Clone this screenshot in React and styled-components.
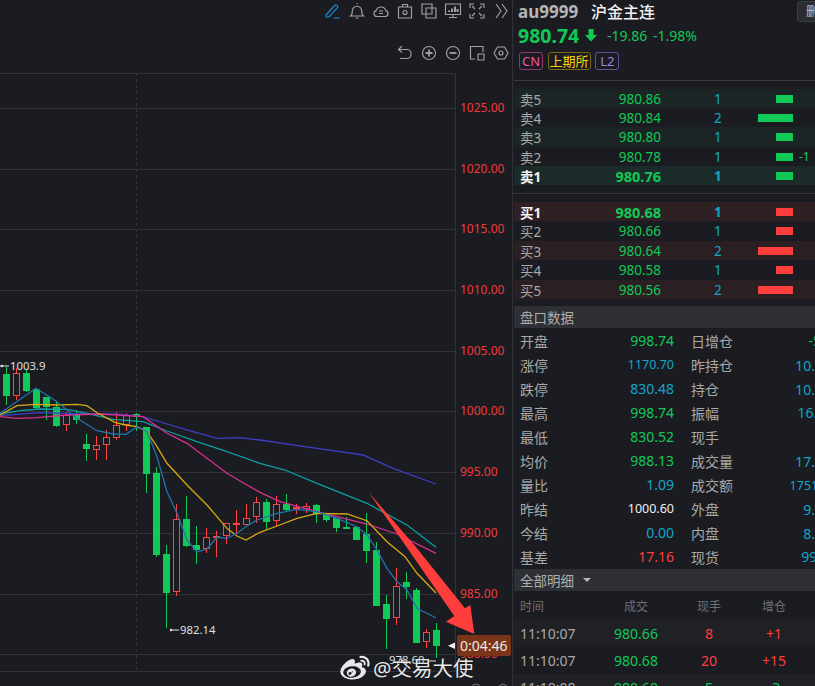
import React from "react";
import styled, { createGlobalStyle } from "styled-components";
import { RiWeiboFill } from "react-icons/ri";

const GREEN = "#10c957";
const RED = "#ff3d3d";
const CYAN = "#0fa6c9";
const FONT = `"Noto Sans", "Noto Sans CJK SC", sans-serif`;

const GlobalStyle = createGlobalStyle`
  html, body {
    margin: 0;
    height: 100%;
    overflow: hidden;
    background: #1b1c21;
    font-family: ${FONT};
  }
`;

const Page = styled.div`
  display: flex;
  width: 815px;
  height: 686px;
  overflow: hidden;
  background: #1b1c21;
`;

const ChartColumn = styled.div`
  position: relative;
  flex: 0 0 512px;
  display: flex;
  flex-direction: column;
`;

const Toolbar = styled.div`
  flex: none;
  display: flex;
  justify-content: flex-end;
  align-items: center;
  gap: 6px;
  box-sizing: border-box;
  height: ${(p) => p.$height}px;
  padding: ${(p) => p.$top || 0}px 2px 0 0;
`;

const ToolIcon = styled.svg`
  width: 18px;
  height: 18px;
  fill: none;
  stroke: ${(p) => p.$color || "#a0a1a3"};
  stroke-width: 1.150;
`;

const ChartSvg = styled.svg`
  display: block;
  flex: 1;
  width: 512px;
`;

const AxisText = styled.text`
  font-family: ${FONT};
  font-size: 12px;
  fill: #f03a3a;
`;

const MarkText = styled.text`
  font-family: ${FONT};
  font-size: 11.3px;
  fill: #dfe0e2;
`;

const TagText = styled.text`
  font-family: ${FONT};
  font-size: 14px;
  fill: #ece7e2;
`;

const Watermark = styled.div`
  position: absolute;
  left: 339px;
  top: 652px;
  display: flex;
  align-items: center;
  gap: 2px;
  color: #e8e8e8;
  font-size: 20.500px;
  line-height: 28px;
  white-space: nowrap;
  text-shadow: 0 0 1px #000;
`;

const Panel = styled.div`
  flex: 0 0 340px;
  border-left: 1px solid #303237;
`;

const Quote = styled.div`
  position: relative;
  height: 81px;
  margin-left: 1px;
  padding-left: 4px;
  box-sizing: border-box;
  border-bottom: 1px solid #3a3b40;
`;

const TitleRow = styled.div`
  display: flex;
  align-items: center;
  height: 22px;
  white-space: nowrap;
`;

const Code = styled.span`
  width: 73px;
  color: #b5b5b5;
  font-size: 17px;
  font-weight: 700;
`;

const Name = styled.span`
  color: #f0f0f0;
  font-size: 16px;
  font-weight: 500;
`;

const WatchButton = styled.div`
  position: absolute;
  left: 283px;
  top: 1px;
  width: 60px;
  height: 21px;
  box-sizing: border-box;
  padding-left: 8px;
  border: 1px solid #3c3e43;
  border-radius: 3px;
  background: #2a2c31;
  color: #c4c4c4;
  font-size: 12px;
  line-height: 20px;
  white-space: nowrap;
`;

const PriceRow = styled.div`
  display: flex;
  align-items: center;
  height: 26px;
  margin-bottom: 4px;
  color: ${GREEN};
  white-space: nowrap;
`;

const LastPrice = styled.span`
  width: 66px;
  font-size: 19.500px;
  font-weight: 700;
`;

const Change = styled.span`
  width: ${(p) => p.$width}px;
  font-size: 14px;
`;

const TagRow = styled.div`
  display: flex;
  gap: 4.500px;
  padding-left: 1px;
`;

const Tag = styled.span`
  height: 16px;
  padding: 0 ${(p) => p.$pad}px;
  border: 1px solid ${(p) => p.$border};
  border-radius: 3px;
  color: ${(p) => p.$color};
  font-size: 13px;
  line-height: 16px;
`;

const Book = styled.div`
  padding: ${(p) => p.$top}px 0 ${(p) => p.$bottom}px 1px;
  border-bottom: ${(p) => (p.$line ? "1px solid #35363b" : "none")};
`;

const BANDS = {
  sell: "#1b2526",
  sellHot: "#1b2b29",
  buy: "#2a1f23",
  buyHot: "#2f2023",
  none: "transparent",
};

const BookRow = styled.div`
  display: grid;
  grid-template-columns: 40px 101px 94px 38px 40px;
  align-items: center;
  height: ${(p) => p.$height}px;
  padding-left: 6px;
  background: ${(p) => BANDS[p.$band]};
`;

const BookLabel = styled.span`
  color: ${(p) => (p.$hot ? "#f4f4f4" : "#a9a9a9")};
  font-size: 13.500px;
  font-weight: ${(p) => (p.$hot ? 700 : 400)};
`;

const BookPrice = styled.span`
  text-align: right;
  color: ${GREEN};
  font-size: ${(p) => (p.$hot ? 14.5 : 13.5)}px;
  font-weight: ${(p) => (p.$hot ? 700 : 400)};
`;

const BookQty = styled.span`
  padding-left: 53px;
  color: ${CYAN};
  font-size: 13.500px;
  font-weight: ${(p) => (p.$hot ? 700 : 400)};
`;

const BarCell = styled.span`
  display: flex;
  justify-content: flex-end;
`;

const Bar = styled.span`
  width: ${(p) => p.$qty * 17.5}px;
  height: 8px;
  background: ${(p) => p.$color};
`;

const Delta = styled.span`
  padding-left: 6px;
  color: ${GREEN};
  font-size: 12px;
`;

const SectionHead = styled.div`
  display: flex;
  align-items: center;
  gap: 9px;
  height: 22px;
  padding-left: 6px;
  margin: 0 0 1px 1px;
  background: #2e3035;
  color: #aeaeae;
  font-size: 13.500px;
`;

const Caret = styled.span`
  width: 0;
  height: 0;
  border-left: 4px solid transparent;
  border-right: 4px solid transparent;
  border-top: 4px solid #b8b8b8;
`;

const StatRow = styled.div`
  display: grid;
  grid-template-columns: 60px 94px 17px 60px 94px;
  align-items: center;
  height: 24px;
  padding-left: 7px;
`;

const StatLabel = styled.span`
  color: #a9a9a9;
  font-size: 14px;
`;

const StatValue = styled.span`
  text-align: right;
  color: ${(p) => p.$color};
  font-size: ${(p) => (p.$small ? 12.5 : 14)}px;
  white-space: nowrap;
`;

const DetailRow = styled.div`
  display: grid;
  grid-template-columns: 76px 80px 66px 64px;
  align-items: center;
  height: ${(p) => p.$height}px;
  padding-left: 7px;
  background: ${(p) => p.$bg || "transparent"};
`;

const HeadCell = styled.span`
  text-align: ${(p) => (p.$left ? "left" : "center")};
  color: #6f7074;
  font-size: 12px;
`;

const Cell = styled.span`
  text-align: ${(p) => (p.$left ? "left" : "center")};
  color: ${(p) => p.$color};
  font-size: 14px;
`;

const TOP_ICONS = [
  <ToolIcon key="pen" viewBox="0 0 18 18" $color="#1f8ad8">
    <path d="M2 13l8.500-9.500a1.800 1.800 0 0 1 2.700 2.400L5 15H2v-2zM9.500 16h6" />
  </ToolIcon>,
  <ToolIcon key="bell" viewBox="0 0 18 18">
    <path d="M2.500 14c1.500-1 1.800-2 1.800-5a4.700 4.700 0 0 1 9.400 0c0 3 .3 4 1.800 5zM7.500 16h3M9 2V1" />
  </ToolIcon>,
  <ToolIcon key="cloud" viewBox="0 0 18 18">
    <path d="M5 14.500a3 3 0 0 1-.8-5.900 5 5 0 0 1 9.600 0 3 3 0 0 1-.8 5.900zM7 9h4M7 11.500h4" />
  </ToolIcon>,
  <ToolIcon key="camera" viewBox="0 0 18 18">
    <path d="M2.500 5h13v11h-13zM6.500 5V2.500h5V5" />
    <circle cx="9" cy="10.500" r="2" />
  </ToolIcon>,
  <ToolIcon key="copy" viewBox="0 0 18 18">
    <path d="M2 2h10v10H2zM6 6h10v10H6z" />
  </ToolIcon>,
  <ToolIcon key="screen" viewBox="0 0 18 18">
    <path d="M1.500 2h15v10.500h-15zM9 12.500V15M5 15.500h8" />
    <path d="M5 10V8.500M8 10V6.500M11 10V4.500M13.500 10V7" strokeWidth="2" />
  </ToolIcon>,
  <ToolIcon key="full" viewBox="0 0 18 18">
    <path d="M2 6V2h4M12 2h4v4M16 12v4h-4M6 16H2v-4M7 7L4 4M11 7l3-3M11 11l3 3M7 11l-3 3" />
  </ToolIcon>,
  <ToolIcon key="more" viewBox="0 0 18 18">
    <path d="M4 2l5 7-5 7M10 2l5 7-5 7" />
  </ToolIcon>,
];

const CHART_ICONS = [
  <ToolIcon key="undo" viewBox="0 0 18 18">
    <path d="M6 2L2.500 5.500 6 8.500M3 5.500h8a4 4 0 0 1 4 4v1a4 4 0 0 1-4 4H4" />
  </ToolIcon>,
  <ToolIcon key="plus" viewBox="0 0 18 18">
    <circle cx="9" cy="9" r="6.500" />
    <path d="M5.500 9h7M9 5.500v7" strokeWidth="1.800" />
  </ToolIcon>,
  <ToolIcon key="minus" viewBox="0 0 18 18">
    <circle cx="9" cy="9" r="6.500" />
    <path d="M5.500 9h7" strokeWidth="1.800" />
  </ToolIcon>,
  <ToolIcon key="layout" viewBox="0 0 18 18">
    <path d="M7 15H2.500V2.500H15V8M10 10h6v6h-6z" />
  </ToolIcon>,
  <ToolIcon key="gear" viewBox="0 0 18 18">
    <path d="M5.500 3h7L16 9l-3.500 6h-7L2 9z" />
    <circle cx="9" cy="9" r="2" />
  </ToolIcon>,
];

const GRID_LINES = [
  { y: 108, label: "1025.00" },
  { y: 169, label: "1020.00" },
  { y: 229, label: "1015.00" },
  { y: 290, label: "1010.00" },
  { y: 351, label: "1005.00" },
  { y: 411, label: "1000.00" },
  { y: 472, label: "995.00" },
  { y: 533, label: "990.00" },
  { y: 594, label: "985.00" },
  { y: 654, label: "980.00" },
];

// up, wick top, wick bottom, body top, body bottom
const CANDLES = [
  [0, 367, 405, 374, 396], [1, 368, 400, 373, 396], [0, 369, 392, 373, 391],
  [0, 388, 410, 389, 408], [0, 397, 420, 397, 407], [0, 402, 427, 407, 426],
  [1, 412, 431, 415, 425], [0, 410, 424, 415, 420], [0, 434, 461, 444, 449],
  [1, 436, 460, 445, 450], [1, 430, 460, 437, 445], [1, 412, 440, 425, 438],
  [1, 413, 431, 415, 425], [0, 413, 431, 414, 417], [0, 427, 493, 427, 474],
  [0, 467, 557, 473, 555], [0, 545, 628, 554, 593], [1, 504, 596, 519, 592],
  [0, 496, 547, 519, 546], [0, 526, 564, 545, 550], [1, 528, 553, 537, 549],
  [1, 531, 557, 536, 537], [1, 523, 544, 523, 536], [1, 510, 534, 523, 525],
  [1, 504, 525, 518, 525], [1, 497, 523, 502, 517], [0, 499, 530, 502, 522],
  [1, 496, 526, 504, 521], [0, 494, 512, 504, 510], [1, 504, 514, 507, 509],
  [1, 503, 513, 506, 509], [0, 504, 523, 505, 514], [0, 513, 522, 513, 520],
  [0, 518, 532, 518, 528], [0, 517, 529, 527, 529], [0, 527, 540, 527, 540],
  [0, 513, 563, 534, 551], [0, 542, 606, 550, 606], [0, 595, 649, 604, 619],
  [1, 568, 625, 586, 618], [0, 572, 599, 582, 587], [0, 588, 643, 590, 643],
  [1, 629, 648, 632, 642], [0, 623, 658, 630, 646],
];

const MA_LINES = [
  {
    color: "#3b3fc4",
    points: "0,415.700 40,412.700 83,414 117,414 143,416.700 167,424 193,431.700 217,438.300 240,437.700 260,440 310,447.300 363,455 393,468.300 436,484",
  },
  {
    color: "#0d9ea0",
    points: "0,414 20,410.700 40,409 67,409.300 87,413.300 113,419.300 143,421.700 167,431 197,441.700 227,451.700 260,463.300 285,470 317,483.300 367,503.300 407,525 436,547.300",
  },
  {
    color: "#d6308f",
    points: "0,416.700 17,418.300 37,417.700 67,415 100,414 143,416.700 167,433.300 187,443.300 227,473.300 247,485 260,492.300 280,501.700 317,511.700 367,524 397,534 436,553.300",
  },
  {
    color: "#d9a90f",
    points: "0,415 17,405.700 36,404.300 57,405 77,404.300 87,405.700 97,412.700 115,422.300 125,425 137,426.700 147,431.700 157,446.700 167,463.300 187,485 207,505 227,528.300 237,536 246,540 260,532.300 277,526 297,518.300 317,513.300 347,514 367,520.700 387,541.700 405,556.700 417,573.300 436,593",
  },
  {
    color: "#1f74ac",
    points: "0,413.300 36,388.300 57,401.700 77,418.300 97,430.700 113,434 126,434.300 137,426.700 147,431.700 157,456.700 167,491.700 177,513.300 187,540 197,552 207,549 217,537.300 227,538.300 237,533.300 247,526 257,520 277,513.300 297,509.300 317,511.700 337,518.300 357,526.700 367,535 377,550 387,568.300 397,581.700 407,590 417,608.300 436,618",
  },
];

const Candle = ({ index, data }) => {
  const [up, wickTop, wickBottom, bodyTop, bodyBottom] = data;
  const x = 6.5 + index * 10;
  const color = up ? "#ff4242" : GREEN;
  const height = bodyBottom - bodyTop;
  return (
    <g>
      <line x1={x} x2={x} y1={wickTop} y2={wickBottom} stroke={color} strokeWidth="1" />
      {up ? (
        <rect
          x={x - 3}
          y={bodyTop + 0.5}
          width="6"
          height={Math.max(height - 1, 1)}
          fill="#1b1c21"
          stroke={color}
        />
      ) : (
        <rect x={x - 3.5} y={bodyTop} width="7" height={height} fill={color} />
      )}
    </g>
  );
};

const Chart = () => (
  <ChartSvg viewBox="0 73 512 613" preserveAspectRatio="xMinYMin slice">
    <line x1="0" x2="455" y1="73.500" y2="73.500" stroke="#303237" />
    <line x1="455.500" x2="455.500" y1="73" y2="671" stroke="#303237" />
    <line x1="0" x2="455" y1="671.500" y2="671.500" stroke="#303237" />
    <line x1="136.500" x2="136.500" y1="73" y2="671" stroke="#33353a" strokeDasharray="3 3" />
    {GRID_LINES.map((line) => (
      <g key={line.y}>
        <line x1="0" x2="455" y1={line.y + 0.5} y2={line.y + 0.5} stroke="#303237" />
        <AxisText x="460" y={line.y + 4}>{line.label}</AxisText>
      </g>
    ))}
    {CANDLES.map((data, i) => (
      <Candle key={i} index={i} data={data} />
    ))}
    {MA_LINES.map((line) => (
      <polyline key={line.color} points={line.points} fill="none" stroke={line.color} strokeWidth="1.300" />
    ))}

    <path d="M0 366h9" stroke="#dfe0e2" />
    <circle cx="2" cy="366" r="1.200" fill="#dfe0e2" />
    <MarkText x="10" y="370">1003.9</MarkText>
    <path d="M170 630h9" stroke="#dfe0e2" />
    <circle cx="171" cy="630" r="1.200" fill="#dfe0e2" />
    <MarkText x="180" y="634">982.14</MarkText>
    <MarkText x="389" y="664">978.60</MarkText>
    <path d="M428 661h8" stroke="#dfe0e2" />

    <path
      d="M369 492.700L415.700 546.700L465 608.300L470.300 605L474.300 634L446 621.700L454.300 616Z"
      fill="#ff3d3a"
    />
    <path d="M448 645.700L455 642.500V649z" fill="#f0f0f0" />
    <rect x="457" y="635" width="54" height="21" rx="2" fill="#7a3519" />
    <TagText x="460" y="651">0:04:46</TagText>

    <circle cx="476" cy="688" r="4" fill="none" stroke="#777" />
    <circle cx="503" cy="688" r="4" fill="none" stroke="#777" />
  </ChartSvg>
);

const SELLS = [
  { label: "卖5", price: "980.86", qty: 1, band: "sell" },
  { label: "卖4", price: "980.84", qty: 2, band: "none" },
  { label: "卖3", price: "980.80", qty: 1, band: "sell" },
  { label: "卖2", price: "980.78", qty: 1, band: "none", delta: "-1" },
  { label: "卖1", price: "980.76", qty: 1, band: "sellHot", hot: true },
];

const BUYS = [
  { label: "买1", price: "980.68", qty: 1, band: "buyHot", hot: true },
  { label: "买2", price: "980.66", qty: 1, band: "none" },
  { label: "买3", price: "980.64", qty: 2, band: "buy" },
  { label: "买4", price: "980.58", qty: 1, band: "none" },
  { label: "买5", price: "980.56", qty: 2, band: "buy" },
];

const STATS = [
  ["开盘", "998.74", GREEN, false, "日增仓", "-5128", GREEN, false],
  ["涨停", "1170.70", CYAN, true, "昨持仓", "10.54万", CYAN, false],
  ["跌停", "830.48", CYAN, false, "持仓", "10.49万", CYAN, false],
  ["最高", "998.74", GREEN, false, "振幅", "16.77%", CYAN, false],
  ["最低", "830.52", GREEN, false, "现手", "2", CYAN, false],
  ["均价", "988.13", GREEN, false, "成交量", "17.72万", CYAN, false],
  ["量比", "1.09", CYAN, false, "成交额", "175182亿", CYAN, true],
  ["昨结", "1000.60", "#eeeeee", true, "外盘", "9.03万", CYAN, false],
  ["今结", "0.00", CYAN, false, "内盘", "8.69万", CYAN, false],
  ["基差", "17.16", RED, false, "现货", "997.90", CYAN, false],
];

const DETAILS = [
  { time: "11:10:07", price: "980.66", qty: "8", diff: "+1", color: RED, bg: "#1f2125" },
  { time: "11:10:07", price: "980.68", qty: "20", diff: "+15", color: RED, bg: "#1b1c21" },
  { time: "11:10:08", price: "980.60", qty: "5", diff: "-3", color: GREEN, bg: "#1f2125" },
];

const BookLines = ({ rows, color, height }) =>
  rows.map((row) => (
    <BookRow key={row.label} $band={row.band} $height={height}>
      <BookLabel $hot={row.hot}>{row.label}</BookLabel>
      <BookPrice $hot={row.hot}>{row.price}</BookPrice>
      <BookQty $hot={row.hot}>{row.qty}</BookQty>
      <BarCell>
        <Bar $qty={row.qty} $color={color} />
      </BarCell>
      {row.delta ? <Delta>{row.delta}</Delta> : <span />}
    </BookRow>
  ));

const App = () => {
  return (
    <Page>
      <GlobalStyle />
      <ChartColumn>
        <Toolbar $height={21}>{TOP_ICONS}</Toolbar>
        <Toolbar $height={52} $top={12}>{CHART_ICONS}</Toolbar>
        <Chart />
        <Watermark>
          <RiWeiboFill size={32} />
          <span>@交易大使</span>
        </Watermark>
      </ChartColumn>

      <Panel>
        <Quote>
          <TitleRow>
            <Code>au9999</Code>
            <Name>沪金主连</Name>
          </TitleRow>
          <WatchButton>删自选</WatchButton>
          <PriceRow>
            <LastPrice>980.74</LastPrice>
            <svg width="14" height="14" viewBox="0 0 14 14" fill={GREEN}>
              <path d="M4.500 1h5v6H13l-6 6.500L1 7h3.500z" />
            </svg>
            <Change $width={9} />
            <Change $width={46}>-19.86</Change>
            <Change $width={60}>-1.98%</Change>
          </PriceRow>
          <TagRow>
            <Tag $pad={2} $border="#8a3a70" $color="#ee55a8">CN</Tag>
            <Tag $pad={1} $border="#7a6810" $color="#ffd200">上期所</Tag>
            <Tag $pad={4} $border="#66509a" $color="#9a82ee">L2</Tag>
          </TagRow>
        </Quote>

        <Book $top={8} $bottom={8} $line>
          <BookLines rows={SELLS} color={GREEN} height={19.2} />
        </Book>
        <Book $top={8} $bottom={7}>
          <BookLines rows={BUYS} color={RED} height={19.4} />
        </Book>

        <SectionHead>盘口数据</SectionHead>
        {STATS.map((s) => (
          <StatRow key={s[0]}>
            <StatLabel>{s[0]}</StatLabel>
            <StatValue $color={s[2]} $small={s[3]}>{s[1]}</StatValue>
            <span />
            <StatLabel>{s[4]}</StatLabel>
            <StatValue $color={s[6]} $small={s[7]}>{s[5]}</StatValue>
          </StatRow>
        ))}

        <SectionHead>
          全部明细
          <Caret />
        </SectionHead>
        <DetailRow $height={28}>
          <HeadCell $left>时间</HeadCell>
          <HeadCell>成交</HeadCell>
          <HeadCell>现手</HeadCell>
          <HeadCell>增仓</HeadCell>
        </DetailRow>
        {DETAILS.map((d, i) => (
          <DetailRow key={i} $height={27} $bg={d.bg}>
            <Cell $left $color="#a9a9a9">{d.time}</Cell>
            <Cell $color={GREEN}>{d.price}</Cell>
            <Cell $color={d.color}>{d.qty}</Cell>
            <Cell $color={d.color}>{d.diff}</Cell>
          </DetailRow>
        ))}
      </Panel>
    </Page>
  );
};

export default App;
